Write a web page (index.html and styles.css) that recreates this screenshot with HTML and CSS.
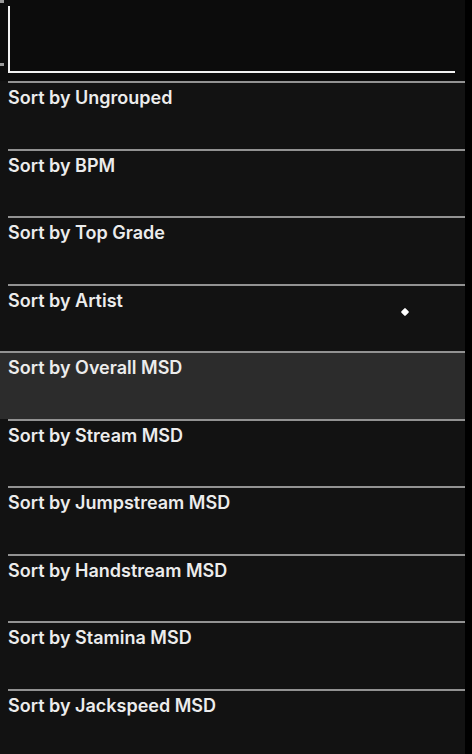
FILE: index.html
```html
<!DOCTYPE html>
<html lang="en">
<head>
  <meta charset="UTF-8" />
  <title>Sort menu</title>
  <link rel="stylesheet" href="styles.css">
</head>
<body>
  <div class="screen">
    <div class="header">
      <span class="tick tick-top"></span>
      <span class="tick tick-bottom"></span>
      <div class="frame"></div>
    </div>

    <ul class="sort-list">
      <li class="sort-item">Sort by Ungrouped</li>
      <li class="sort-item">Sort by BPM</li>
      <li class="sort-item">Sort by Top Grade</li>
      <li class="sort-item">Sort by Artist<span class="cursor"></span></li>
      <li class="sort-item active">Sort by Overall MSD</li>
      <li class="sort-item">Sort by Stream MSD</li>
      <li class="sort-item">Sort by Jumpstream MSD</li>
      <li class="sort-item">Sort by Handstream MSD</li>
      <li class="sort-item">Sort by Stamina MSD</li>
      <li class="sort-item">Sort by Jackspeed MSD</li>
    </ul>
  </div>
</body>
</html>
```

FILE: styles.css
```css
:root {
  --bg-top:   #0c0c0c;
  --bg-list:  #121212;
  --bg-active: #2c2c2c;
  --rule:     #929292;
  --text:     #ececec;
}

* {
  box-sizing: border-box;
  margin: 0;
  padding: 0;
}

body {
  background: #000;
  font-family: 'Inter', 'Liberation Sans', sans-serif;
  color: var(--text);
  height: 754px;
  overflow: hidden;
}

.screen {
  width: 465px;
  height: 754px;
  background: var(--bg-list);
}

.header {
  position: relative;
  height: 81px;
  background: var(--bg-top);
  padding: 6px 10px 0 8px;
}

.frame {
  height: 67px;
  border-left: 2px solid #f2f2f2;
  border-bottom: 2px solid #f2f2f2;
}

/* tiny markers at the left edge */
.tick {
  position: absolute;
  left: 0;
  width: 4px;
  height: 3px;
  background: #9a9a9a;
}

.tick-top { top: 0; }
.tick-bottom { top: 63px; }

.sort-list {
  list-style: none;
}

.sort-item {
  position: relative;
  height: 67.5px;
  border-top: 2px solid var(--rule);
  margin-left: 8px;
  padding-top: 4px;
  font-size: 18px;
  font-weight: 600;
  line-height: 22px;
}

.sort-item.active {
  margin-left: 0;
  padding-left: 8px;
  background: var(--bg-active);
}

.cursor {
  position: absolute;
  left: 394px;
  top: 23px;
  width: 6px;
  height: 6px;
  background: #fff;
  transform: rotate(45deg);
  border-radius: 1px;
}
```
